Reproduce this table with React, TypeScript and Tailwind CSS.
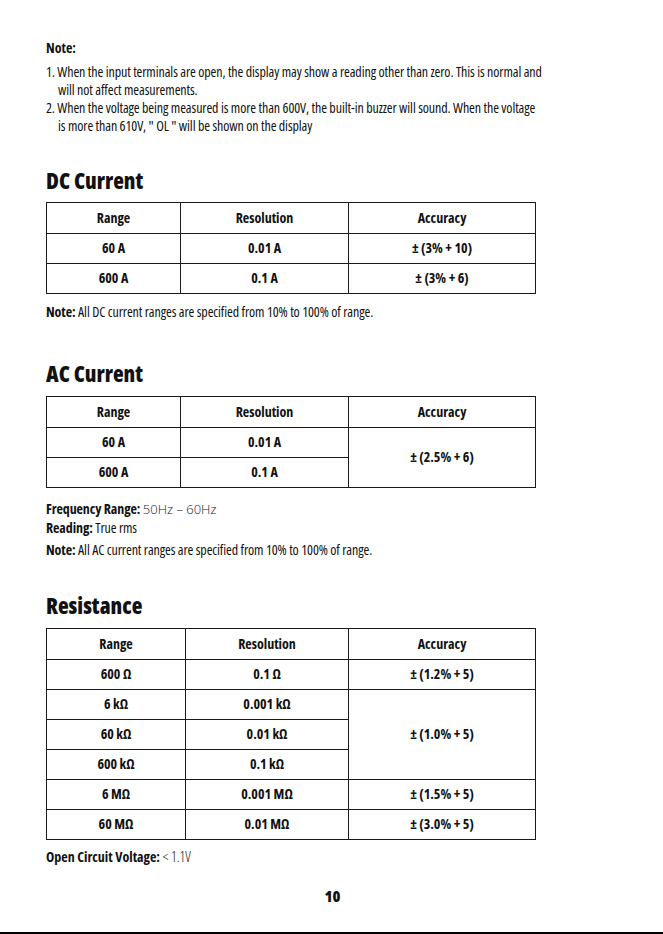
import React from "react";

const narrow = { fontFamily: '"Open Sans", "DejaVu Sans Condensed", sans-serif', fontStretch: "75%" };
const light = { fontFamily: '"Open Sans", sans-serif', fontStretch: "100%" };

type Cell = { text: string; rowSpan?: number };

// simple spec table, three columns
function SpecTable({ cols, rows }: { cols: [string, string, string]; rows: Cell[][] }) {
  return (
    <table className="border-collapse w-[489px] table-fixed text-[14px] font-bold text-[#111]">
      <colgroup>
        <col style={{ width: cols[0] }} />
        <col style={{ width: cols[1] }} />
        <col style={{ width: cols[2] }} />
      </colgroup>
      <tbody>
        <tr className="h-[31px]">
          <td className="border border-[#1a1a1a] text-center align-middle pb-[2px]">Range</td>
          <td className="border border-[#1a1a1a] text-center align-middle pb-[2px]">Resolution</td>
          <td className="border border-[#1a1a1a] text-center align-middle pb-[2px]">Accuracy</td>
        </tr>
        {rows.map((r, i) => (
          <tr key={i} className="h-[30px]">
            {r.map((c, j) => (
              <td key={j} rowSpan={c.rowSpan} className="border border-[#1a1a1a] text-center align-middle p-0 pb-[2px]">
                {c.text}
              </td>
            ))}
          </tr>
        ))}
      </tbody>
    </table>
  );
}

export default function App() {
  return (
    <div className="w-[663px] h-[934px] bg-white border-b-2 border-black box-border text-[#111]" style={narrow}>
      <div className="pl-[46px] pt-[39px]">
        <p className="text-[14px] leading-[18px] font-bold">Note:</p>
        <div className="mt-[6px] text-[14px] leading-[18px] tracking-[-0.1px] whitespace-nowrap">
          <p>1. When the input terminals are open, the display may show a reading other than zero. This is normal and</p>
          <p className="pl-[12px]">will not affect measurements.</p>
          <p>2. When the voltage being measured is more than 600V, the built-in buzzer will sound. When the voltage</p>
          <p className="pl-[12px]">is more than 610V, " OL " will be shown on the display</p>
        </div>

        {/* DC current */}
        <h2 className="mt-[31px] text-[22px] leading-[28px] font-extrabold">DC Current</h2>
        <div className="mt-[8px]">
          <SpecTable
            cols={["134px", "168px", "187px"]}
            rows={[
              [{ text: "60 A" }, { text: "0.01 A" }, { text: "± (3% + 10)" }],
              [{ text: "600 A" }, { text: "0.1 A" }, { text: "± (3% + 6)" }],
            ]}
          />
        </div>
        <p className="mt-[9px] text-[14px] leading-[18px] tracking-[-0.1px]">
          <span className="font-bold">Note:</span> All DC current ranges are specified from 10% to 100% of range.
        </p>

        {/* AC current */}
        <h2 className="mt-[38px] text-[22px] leading-[28px] font-extrabold">AC Current</h2>
        <div className="mt-[9px]">
          <SpecTable
            cols={["134px", "168px", "187px"]}
            rows={[
              [{ text: "60 A" }, { text: "0.01 A" }, { text: "± (2.5% + 6)", rowSpan: 2 }],
              [{ text: "600 A" }, { text: "0.1 A" }],
            ]}
          />
        </div>
        <div className="mt-[11px] text-[14px] tracking-[-0.1px]">
          <p className="h-[19px] leading-[19px]">
            <span className="font-bold">Frequency Range:</span>{" "}
            <span className="font-light text-[13px] leading-[19px] text-[#222] tracking-normal" style={light}>50Hz – 60Hz</span>
          </p>
          <p className="h-[19px] leading-[19px]">
            <span className="font-bold">Reading:</span> True rms
          </p>
          <p className="mt-[3px] h-[19px] leading-[19px]">
            <span className="font-bold">Note:</span> All AC current ranges are specified from 10% to 100% of range.
          </p>
        </div>

        {/* Resistance */}
        <h2 className="mt-[32px] text-[22px] leading-[28px] font-extrabold">Resistance</h2>
        <div className="mt-[9px]">
          <SpecTable
            cols={["139px", "163px", "187px"]}
            rows={[
              [{ text: "600 Ω" }, { text: "0.1 Ω" }, { text: "± (1.2% + 5)" }],
              [{ text: "6 kΩ" }, { text: "0.001 kΩ" }, { text: "± (1.0% + 5)", rowSpan: 3 }],
              [{ text: "60 kΩ" }, { text: "0.01 kΩ" }],
              [{ text: "600 kΩ" }, { text: "0.1 kΩ" }],
              [{ text: "6 MΩ" }, { text: "0.001 MΩ" }, { text: "± (1.5% + 5)" }],
              [{ text: "60 MΩ" }, { text: "0.01 MΩ" }, { text: "± (3.0% + 5)" }],
            ]}
          />
        </div>
        <p className="mt-[8px] h-[18px] text-[14px] leading-[18px]">
          <span className="font-bold">Open Circuit Voltage:</span>{" "}
          <span className="font-light text-[14px] leading-[18px]" style={{ ...light, fontStretch: "87.5%" }}>&lt; 1.1V</span>
        </p>
      </div>
      <p className="mt-[20px] text-center pl-[2px] text-[16px] leading-[20px] font-extrabold">10</p>
    </div>
  );
}
